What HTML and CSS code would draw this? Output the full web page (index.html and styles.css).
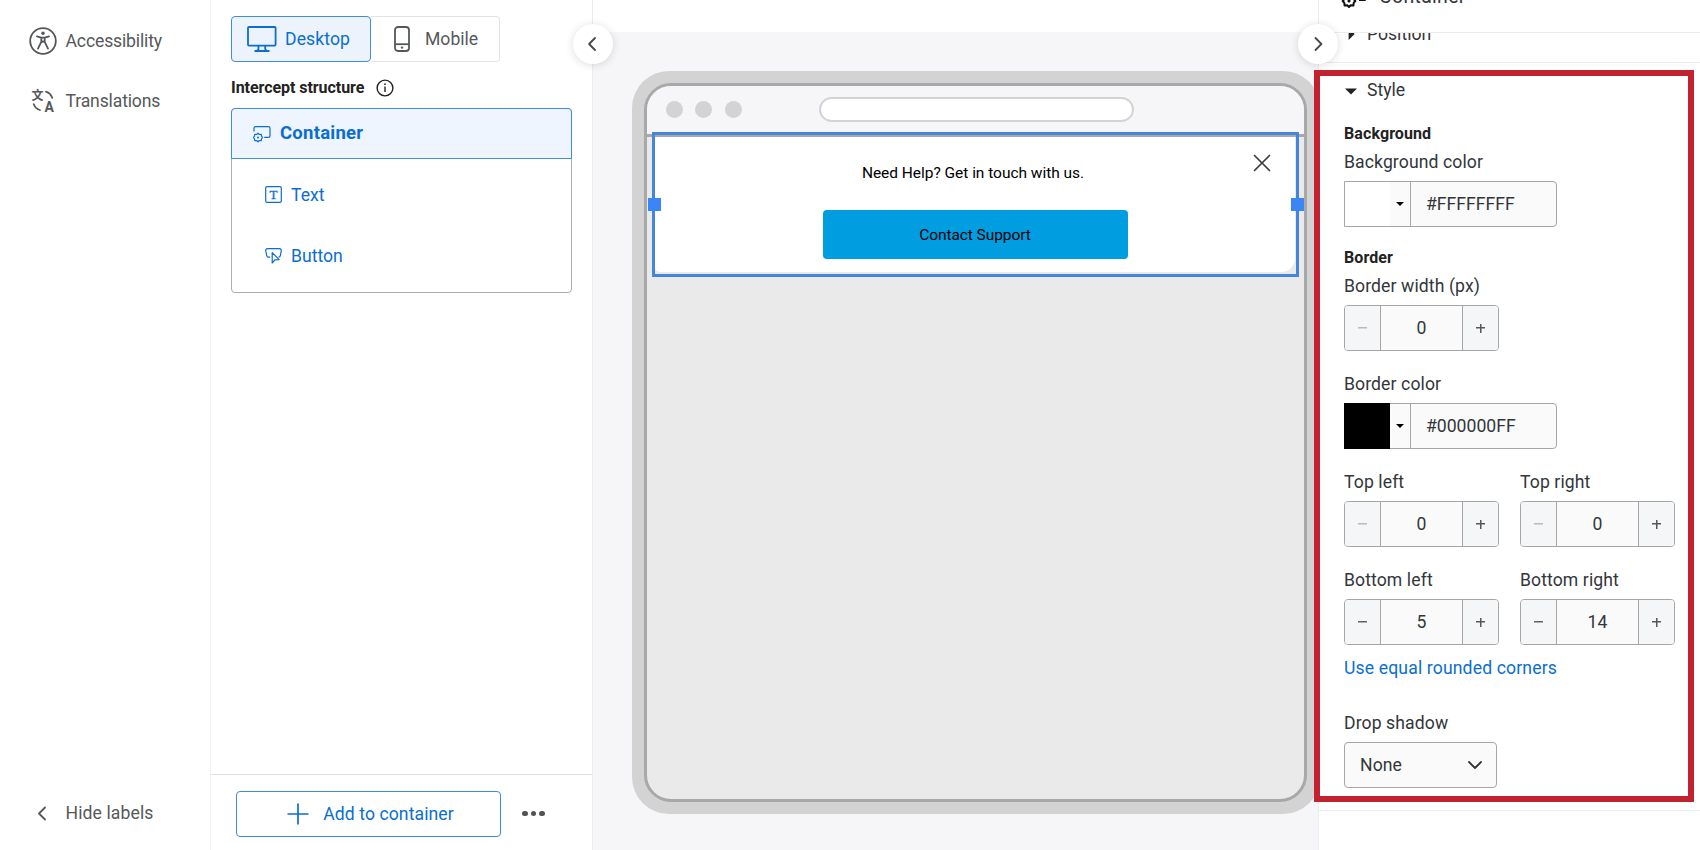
FILE: index.html
```html
<!DOCTYPE html>
<html lang="en">
  <head>
    <meta charset="UTF-8" />
    <meta name="viewport" content="width=device-width, initial-scale=1.0" />
    <title>Intercept editor</title>
    <link rel="stylesheet" href="styles.css">
  </head>
  <body>
    <nav class="sidebar">
      <a class="nav-item">
        <svg width="28" height="28" viewBox="0 0 28 28" fill="none" stroke="currentColor" stroke-width="1.8" stroke-linecap="round" stroke-linejoin="round">
          <circle cx="14" cy="14" r="12.8" />
          <circle cx="14" cy="6.3" r="1.7" fill="currentColor" stroke="none" />
          <path d="M8 9.4l4.3 1.2v4.2L9 21.6M20 9.4l-4.3 1.2v4.2l3.3 6.8M12.3 10.6h3.4M12.3 15.2l1.7-.8 1.7.8" />
        </svg>
        <span>Accessibility</span>
      </a>
      <a class="nav-item">
        <svg width="28" height="28" viewBox="0 0 28 28" fill="none" stroke="currentColor" stroke-width="1.8" stroke-linecap="round">
          <text class="glyph-cjk" x="2.5" y="12.5">文</text>
          <text class="glyph-a" x="15.4" y="25.4">A</text>
          <path d="M17 4.6c3 1 5.200 3.200 6.200 6.200M4.800 17.200c1.100 2.900 3.300 5 6.200 5.800" />
        </svg>
        <span>Translations</span>
      </a>
      <a class="nav-item nav-hide">
        <svg width="28" height="28" viewBox="0 0 28 28" fill="none" stroke="currentColor" stroke-width="1.8" stroke-linecap="round" stroke-linejoin="round">
          <path d="M16 8.500l-6 6 6 6" />
        </svg>
        <span>Hide labels</span>
      </a>
    </nav>

    <section class="structure">
      <div class="structure-body">
        <div class="tabs">
          <button class="tab tab-desktop active">
            <svg width="30" height="28" viewBox="0 0 30 28" fill="none" stroke="currentColor" stroke-width="1.8" stroke-linejoin="round">
              <rect x="1" y="2" width="27.600" height="18.600" rx="1" />
              <path d="M11.500 20.800v3.200l-1.200 1.800M18.200 20.800v3.200l1.200 1.800M7.500 26h15" />
            </svg>
            <span>Desktop</span>
          </button>
          <button class="tab tab-mobile">
            <svg width="16" height="28" viewBox="0 0 16 28" fill="none" stroke="currentColor" stroke-width="1.8">
              <rect x="1" y="2" width="14" height="24" rx="3" />
              <path d="M1 19.200h14" />
              <circle cx="8" cy="22.600" r="1.200" fill="currentColor" stroke="none" />
            </svg>
            <span>Mobile</span>
          </button>
        </div>

        <div class="structure-title">
          <span>Intercept structure</span>
          <svg width="18" height="18" viewBox="0 0 18 18" fill="none" stroke="currentColor" stroke-width="1.400">
            <circle cx="9" cy="9" r="7.900" />
            <path d="M9 7.400v5.600" />
            <circle cx="9" cy="5.200" r=".9" fill="currentColor" stroke="none" />
          </svg>
        </div>

        <div class="tree">
          <div class="tree-root">
            <svg width="18" height="18" viewBox="0 0 18 18" fill="none" stroke="currentColor" stroke-width="1.200" stroke-linejoin="round">
              <path d="M1 6.500V3.200c0-1 .6-1.600 1.600-1.600h12.800c1 0 1.600.6 1.600 1.600v7.600c0 1-.6 1.600-1.600 1.600h-4.200" />
              <path d="M5 8.200l1.300 1.300 1.900-.2.300 1.900 1 1.300-1 1.300-.3 1.900-1.900-.2L5 16.800l-1.300-1.300-1.900.2-.3-1.900-1-1.300 1-1.300.3-1.900 1.900.2z" />
              <circle cx="5" cy="12.500" r="1" fill="currentColor" stroke="none" />
            </svg>
            <span>Container</span>
          </div>
          <div class="tree-item">
            <svg width="17" height="17" viewBox="0 0 17 17" fill="none" stroke="currentColor" stroke-width="1.200">
              <rect x=".7" y=".7" width="15.600" height="15.600" rx="1.400" />
              <text class="glyph-t" x="8.500" y="13">T</text>
            </svg>
            <span>Text</span>
          </div>
          <div class="tree-item">
            <svg width="17" height="17" viewBox="0 0 17 17" fill="none" stroke="currentColor" stroke-width="1.200" stroke-linejoin="round">
              <path d="M5 10.200H3.600C2.600 10.200 2 9.600 1.800 8.800L.8 4.200C.5 2.600 1.200 1.600 2.600 1.600h11.800c1.400 0 2.100 1 1.800 2.600l-.8 4.400c-.2 1-.8 1.600-2 1.600" />
              <path d="M7.200 5.600v10.400l2.700-3.200 4.300-.2z" />
            </svg>
            <span>Button</span>
          </div>
        </div>
      </div>

      <div class="structure-footer">
        <button class="add-button">
          <svg width="22" height="22" viewBox="0 0 22 22" fill="none" stroke="currentColor" stroke-width="1.700">
            <path d="M11 .5v21M.5 11h21" />
          </svg>
          <span>Add to container</span>
        </button>
        <div class="more"><i></i><i></i><i></i></div>
      </div>

      <button class="toggle">
        <svg width="20" height="20" viewBox="0 0 20 20" fill="none" stroke="currentColor" stroke-width="1.800" stroke-linecap="round" stroke-linejoin="round">
          <path d="M12 4L6.100 10l5.900 6" />
        </svg>
      </button>
    </section>

    <main class="canvas">
      <div class="canvas-top"></div>
      <div class="device">
        <div class="screen">
          <div class="browser-bar">
            <div class="dots"><i></i><i></i><i></i></div>
            <div class="url"></div>
          </div>
          <div class="intercept">
            <p class="intercept-text">Need Help? Get in touch with us.</p>
            <button class="support">Contact Support</button>
            <svg class="close" width="18" height="18" viewBox="0 0 18 18" fill="none" stroke="currentColor" stroke-width="1.700" stroke-linecap="round">
              <path d="M1.500 1.500l15 15M16.500 1.500l-15 15" />
            </svg>
            <div class="selection">
              <i class="handle handle-left"></i>
              <i class="handle handle-right"></i>
            </div>
          </div>
        </div>
      </div>
    </main>

    <aside class="settings">
      <header class="settings-header">
        <svg width="28" height="24" viewBox="0 0 28 24" fill="none" stroke="currentColor" stroke-width="2" stroke-linejoin="round">
          <path d="M2 8V2h22v13h-6" />
          <path d="M8 10l1.700 1.700 2.700-.3.300 2.700 1.600 1.900-1.600 1.900-.3 2.700-2.700-.3L8 22l-1.700-1.700-2.700.3-.3-2.700L1.700 16l1.600-1.900.3-2.700 2.700.3z" />
          <circle cx="8" cy="16" r="1.500" fill="currentColor" stroke="none" />
        </svg>
        <span>Container</span>
      </header>
      <div class="settings-scroll">
        <div class="section-row position-row">
          <i class="arrow-right"></i>
          <span>Position</span>
        </div>
        <div class="section-row">
          <i class="arrow-down"></i>
          <span>Style</span>
        </div>

        <div class="fields">
          <h4>Background</h4>
          <div class="field">
            <label>Background color</label>
            <div class="color">
              <span class="swatch swatch-white"></span>
              <span class="drop"><i></i></span>
              <span class="hex">#FFFFFFFF</span>
            </div>
          </div>

          <h4>Border</h4>
          <div class="field">
            <label>Border width (px)</label>
            <div class="stepper">
              <b class="minus disabled"></b><span>0</span><b class="plus"></b>
            </div>
          </div>
          <div class="field">
            <label>Border color</label>
            <div class="color">
              <span class="swatch swatch-black"></span>
              <span class="drop"><i></i></span>
              <span class="hex">#000000FF</span>
            </div>
          </div>

          <div class="corners">
            <div class="field">
              <label>Top left</label>
              <div class="stepper">
                <b class="minus disabled"></b><span>0</span><b class="plus"></b>
              </div>
            </div>
            <div class="field">
              <label>Top right</label>
              <div class="stepper">
                <b class="minus disabled"></b><span>0</span><b class="plus"></b>
              </div>
            </div>
            <div class="field">
              <label>Bottom left</label>
              <div class="stepper">
                <b class="minus"></b><span>5</span><b class="plus"></b>
              </div>
            </div>
            <div class="field">
              <label>Bottom right</label>
              <div class="stepper">
                <b class="minus"></b><span>14</span><b class="plus"></b>
              </div>
            </div>
          </div>
          <a class="link">Use equal rounded corners</a>

          <div class="field">
            <label>Drop shadow</label>
            <div class="select">
              <span>None</span>
              <svg width="16" height="12" viewBox="0 0 16 12" fill="none" stroke="currentColor" stroke-width="1.800" stroke-linecap="round" stroke-linejoin="round">
                <path d="M2 3l6 6 6-6" />
              </svg>
            </div>
          </div>
        </div>
      </div>
      <button class="toggle toggle-right">
        <svg width="20" height="20" viewBox="0 0 20 20" fill="none" stroke="currentColor" stroke-width="1.800" stroke-linecap="round" stroke-linejoin="round">
          <path d="M7.500 4l5.900 6-5.900 6" />
        </svg>
      </button>
      <div class="highlight"></div>
    </aside>
  </body>
</html>
```

FILE: styles.css
```css
* {
  box-sizing: border-box;
}

body {
  margin: 0;
  display: flex;
  height: 850px;
  overflow: hidden;
  background-color: #fff;
  color: #32363a;
  font-family: Roboto, "Liberation Sans", sans-serif;
  font-size: 17.6px;
  line-height: 24px;
  white-space: nowrap;
}

button {
  margin: 0;
  padding: 0;
  font: inherit;
  letter-spacing: inherit;
  background: none;
  border: none;
  cursor: pointer;
}

svg {
  flex: none;
}

/* left navigation */

.sidebar {
  width: 211px;
  height: 850px;
  padding: 27px 0 23px 29px;
  border-right: 1px solid #f2f2f2;
  display: flex;
  flex-direction: column;
  gap: 32px;
  color: #55585a;
  letter-spacing: -0.15px;
}

.nav-item {
  display: flex;
  align-items: center;
  gap: 8.5px;
  height: 28px;
}

.nav-hide {
  margin-top: auto;
  letter-spacing: 0.1px;
}

.glyph-cjk {
  font: bold 12px "Noto Sans CJK SC", sans-serif;
  fill: currentColor;
  stroke: none;
}

.glyph-a {
  font: bold 14px Roboto, sans-serif;
  fill: currentColor;
  stroke: none;
}

.glyph-t {
  font: 13px "Liberation Serif", serif;
  fill: currentColor;
  stroke: currentColor;
  stroke-width: 0.3px;
  text-anchor: middle;
}

/* structure panel */

.structure {
  position: relative;
  z-index: 2;
  width: 382px;
  display: flex;
  flex-direction: column;
  border-right: 1px solid #ececec;
}

.structure-body {
  flex: 1;
  padding: 16px 20px 0;
}

.tabs {
  display: flex;
  width: 269px;
  height: 46px;
}

.tab {
  display: flex;
  align-items: center;
  border: 1px solid #e3e3e3;
  color: #55585a;
}

.tab span {
  padding-bottom: 1px;
}

.tab-desktop {
  width: 140px;
  padding-left: 15px;
  gap: 8px;
  border-radius: 4px;
  letter-spacing: 0.1px;
}

.tab-mobile {
  width: 129px;
  padding-left: 23px;
  gap: 15px;
  border-left: none;
  border-radius: 0 4px 4px 0;
}

.tab.active {
  color: #0a6ed1;
  background-color: #edf3fd;
  border-color: #3f8cdb;
}

.structure-title {
  display: flex;
  align-items: center;
  gap: 12px;
  height: 24px;
  margin: 14px 0 8px;
  color: #222;
  font-size: 16px;
  font-weight: bold;
  letter-spacing: -0.05px;
}

.tree {
  width: 341px;
  height: 185px;
  border: 1px solid #adadad;
  border-radius: 4px;
  color: #0a6ed1;
}

.tree-root {
  display: flex;
  align-items: center;
  gap: 9px;
  height: 51px;
  margin: -1px -1px 5px;
  padding-left: 21px;
  border: 1px solid #3f8cdb;
  border-radius: 4px 4px 0 0;
  background-color: #eef5fe;
  font-size: 18.5px;
  font-weight: bold;
  letter-spacing: 0.25px;
}

.tree-root span {
  padding-bottom: 1px;
}

.tree-item {
  display: flex;
  align-items: center;
  gap: 9px;
  height: 61px;
  padding-left: 33px;
}

.structure-footer {
  display: flex;
  align-items: center;
  gap: 21px;
  height: 76px;
  padding: 2px 0 0 25px;
  border-top: 1px solid #dfdfdf;
}

.add-button {
  display: flex;
  align-items: center;
  justify-content: center;
  gap: 14px;
  width: 265px;
  height: 46px;
  padding-left: 4px;
  border: 1px solid #3f8cdb;
  border-radius: 4px;
  color: #0a6ed1;
  letter-spacing: 0.08px;
}

.more {
  display: flex;
  gap: 3px;
}

.more i {
  width: 5.5px;
  height: 5.5px;
  border-radius: 50%;
  background-color: #515456;
}

.toggle {
  position: absolute;
  top: 24px;
  right: -21px;
  display: flex;
  align-items: center;
  justify-content: center;
  width: 40px;
  height: 40px;
  border-radius: 50%;
  background-color: #fff;
  color: #45484a;
  box-shadow: 0 1px 8px rgba(0, 0, 0, 0.14);
}

.toggle-right {
  left: -21px;
  right: auto;
}

/* preview */

.canvas {
  width: 725px;
  height: 850px;
  overflow: hidden;
  background-color: #f6f6f8;
}

.canvas-top {
  height: 32px;
  background-color: #fff;
}

.device {
  width: 688px;
  height: 743px;
  margin: 39px 0 0 39px;
  padding: 12px 13px 12px 12px;
  border-radius: 37px;
  background-color: #d3d3d3;
}

.screen {
  height: 719px;
  border: 3px solid #a8a8a8;
  border-radius: 27px;
  background-color: #eaeaea;
}

.browser-bar {
  display: flex;
  align-items: center;
  height: 51px;
  padding: 0 19px 2px;
  border-bottom: 3px solid #a8a8a8;
  border-radius: 24px 24px 0 0;
  background-color: #f6f6f8;
}

.dots {
  display: flex;
  gap: 12.3px;
}

.dots i {
  width: 17px;
  height: 17px;
  border-radius: 50%;
  background-color: #d3d3d3;
}

.url {
  width: 315px;
  height: 25px;
  margin-left: 77px;
  border: 2px solid #d3d3d3;
  border-radius: 13px;
  background-color: #fff;
}

.intercept {
  position: relative;
  display: flex;
  flex-direction: column;
  align-items: center;
  width: 640px;
  height: 135px;
  margin-left: 8px;
  padding: 24px 0 0;
  border-radius: 0 0 14px 5px;
  background-color: #fff;
  color: #000;
  font-size: 15.5px;
}

.intercept-text {
  margin: 0 0 25px;
  padding-right: 4px;
  letter-spacing: -0.03px;
}

.support {
  width: 305px;
  height: 49px;
  border-radius: 4px;
  background-color: #009de0;
  letter-spacing: -0.07px;
}

.close {
  position: absolute;
  top: 17px;
  right: 24px;
  color: #3c3c3c;
}

.selection {
  position: absolute;
  top: -5px;
  left: -3px;
  width: 647px;
  height: 145px;
  border: 3px solid #4685de;
}

.handle {
  position: absolute;
  top: 63px;
  width: 13px;
  height: 13px;
  background-color: #3b86f7;
}

.handle-left {
  left: -7px;
}

.handle-right {
  right: -8px;
}

/* settings panel */

.settings {
  position: relative;
  width: 382px;
  height: 850px;
  border-left: 1px solid #ededed;
  background-color: #fff;
  letter-spacing: 0.1px;
}

/* header is scrolled half way out of the window */
.settings-header {
  display: flex;
  align-items: center;
  gap: 10px;
  height: 72px;
  margin-top: -39px;
  padding-left: 22px;
  border-bottom: 1px solid #ececec;
  font-size: 19.5px;
  letter-spacing: 0.3px;
}

.settings-header svg {
  color: #111;
}

.settings-scroll {
  height: 778px;
  overflow: hidden;
  border-bottom: 1px solid #ececec;
}

.section-row {
  display: flex;
  align-items: center;
  height: 54px;
  padding-left: 26px;
  gap: 10px;
}

.section-row span {
  letter-spacing: 0;
}

.position-row {
  height: 57px;
  margin-top: -27px;
  border-bottom: 1px solid #ececec;
}

.arrow-right,
.arrow-down {
  width: 12px;
  height: 12px;
  background-color: #222;
}

.arrow-right {
  clip-path: polygon(30% 0, 80% 50%, 30% 100%);
}

.arrow-down {
  clip-path: polygon(0 38%, 100% 38%, 50% 88%);
}

.fields {
  padding: 5px 0 0 25px;
}

.fields h4 {
  margin: 0 0 4px;
  color: #222;
  font-size: 16px;
  font-weight: bold;
}

.field {
  margin-bottom: 21px;
}

.field + h4 {
  margin-top: -2px;
}

.field label {
  display: block;
  margin-bottom: 7px;
}

.color,
.stepper,
.select {
  display: flex;
  height: 46px;
  border: 1px solid #a6a6a6;
  border-radius: 4px;
  background-color: #fafafa;
}

.color {
  width: 213px;
  border-radius: 0 4px 4px 0;
}

.swatch {
  width: 45px;
}

.swatch-white {
  background-color: #fff;
}

.swatch-black {
  margin: -1px 0 -1px -1px;
  width: 46px;
  background-color: #000;
}

.drop {
  display: flex;
  align-items: center;
  justify-content: center;
  width: 21px;
  border-right: 1px solid #a6a6a6;
}

.drop i {
  width: 8px;
  height: 4px;
  background-color: #000;
  clip-path: polygon(0 0, 100% 0, 50% 100%);
}

.hex {
  padding: 10px 0 0 15px;
  letter-spacing: 0;
}

.stepper {
  width: 155px;
  overflow: hidden;
}

.stepper span {
  flex: 1;
  padding-top: 10px;
  border-left: 1px solid #a6a6a6;
  border-right: 1px solid #a6a6a6;
  text-align: center;
}

.stepper b {
  width: 35px;
  background-color: #f5f6f8;
  background-repeat: no-repeat;
  background-position: center;
}

.minus {
  background-image: linear-gradient(#606366, #606366);
  background-size: 9px 1.5px;
}

.minus.disabled {
  background-image: linear-gradient(#b9babc, #b9babc);
}

.stepper .plus {
  background-image: linear-gradient(#55585a, #55585a), linear-gradient(#55585a, #55585a);
  background-size: 9px 1.5px, 1.5px 9px;
}

.corners {
  display: grid;
  grid-template-columns: 155px 155px;
  column-gap: 21px;
}

.link {
  display: block;
  margin: -10px 0 31px;
  color: #0a6ed1;
  letter-spacing: 0.14px;
}

.select {
  align-items: center;
  justify-content: space-between;
  width: 153px;
  padding: 0 13px 0 15px;
}

.highlight {
  position: absolute;
  top: 70px;
  left: -5px;
  width: 380px;
  height: 732px;
  border: 6px solid #c0222f;
}
```
